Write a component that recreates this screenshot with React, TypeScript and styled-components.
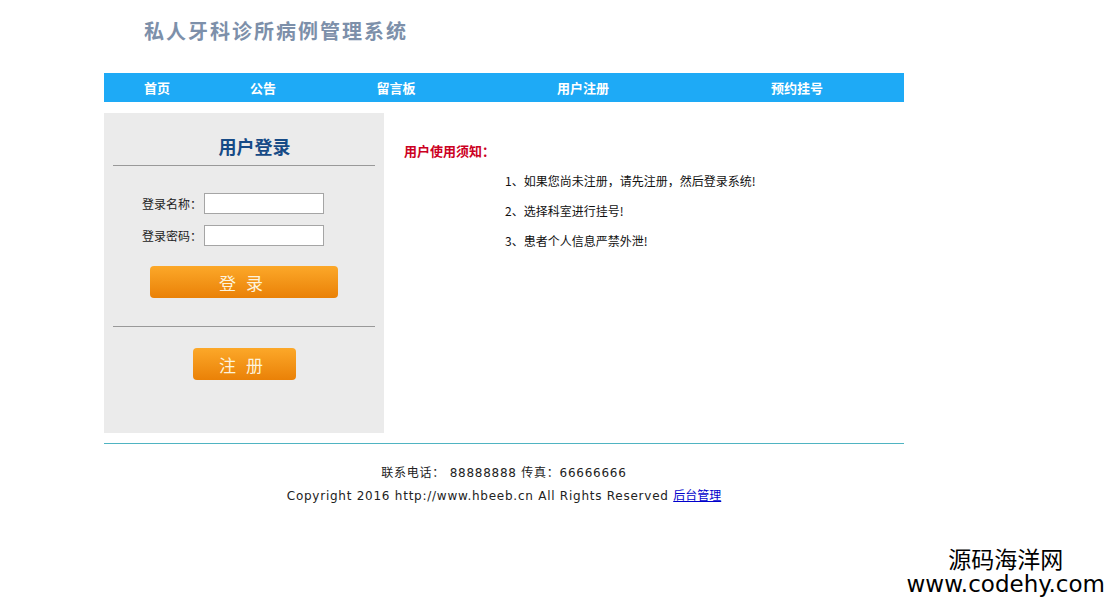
import React from 'react';
import styled, { createGlobalStyle } from 'styled-components';

const GlobalStyle = createGlobalStyle`
  body {
    margin: 0;
    background: #fff;
    font-family: 'Noto Sans CJK SC', 'DejaVu Sans', sans-serif;
  }
`;

const Page = styled.div`
  width: 800px;
  margin-left: 104px;
`;

const Header = styled.div`
  height: 73px;
  display: flex;
  align-items: center;
  padding-left: 40px;
  padding-bottom: 13px;
  box-sizing: border-box;
`;

const SiteTitle = styled.h1`
  margin: 0;
  font-size: 20px;
  font-weight: bold;
  color: #7d90aa;
  letter-spacing: 2px;
  font-family: 'Noto Sans CJK SC', serif;
`;

const Nav = styled.div`
  height: 29px;
  background: #1eaaf6;
  display: flex;
`;

const NavItem = styled.a<{ $w: number }>`
  width: ${(p) => p.$w}px;
  display: flex;
  align-items: center;
  justify-content: center;
  color: #fff;
  font-size: 13px;
  font-weight: bold;
  text-decoration: none;
`;

const Main = styled.div`
  display: flex;
  margin-top: 11px;
  height: 320px;
`;

const LoginPanel = styled.div`
  width: 280px;
  background: #ebebeb;
  display: flex;
  flex-direction: column;
  align-items: center;
  padding: 0 9px;
  box-sizing: border-box;
`;

const PanelTitle = styled.h2`
  margin: 0;
  width: 100%;
  text-align: center;
  font-size: 18px;
  font-weight: bold;
  color: #164a86;
  padding: 20px 0 6px 21px;
  box-sizing: border-box;
  border-bottom: 1px solid #999;
  line-height: 26px;
`;

const Form = styled.div`
  display: flex;
  flex-direction: column;
  gap: 11px;
  margin-top: 27px;
  margin-left: -22px;
`;

const Row = styled.label`
  display: flex;
  align-items: center;
  font-size: 12px;
  color: #222;
`;

const Input = styled.input`
  width: 120px;
  height: 21px;
  box-sizing: border-box;
  border: 1px solid #a5a5a5;
  background: #fff;
  margin-left: 2px;
`;

const OrangeButton = styled.button<{ $w: number }>`
  width: ${(p) => p.$w}px;
  height: 32px;
  border: none;
  border-radius: 4px;
  background: linear-gradient(#fca829, #ea8107);
  color: #fdf3dc;
  font-size: 17px;
  letter-spacing: 10px;
  padding-left: 10px;
  font-family: 'Noto Sans CJK SC', sans-serif;
  cursor: pointer;
`;

const LoginButtonWrap = styled.div`
  margin-top: 20px;
  padding-bottom: 28px;
  width: 100%;
  display: flex;
  justify-content: center;
  border-bottom: 1px solid #999;
`;

const RegisterWrap = styled.div`
  margin-top: 21px;
`;

const Notice = styled.div`
  flex: 1;
  padding: 28px 0 0 20px;
`;

const NoticeTitle = styled.h3`
  margin: 0 0 6px;
  color: #cc0022;
  font-size: 13px;
  font-weight: bold;
`;

const NoticeItem = styled.p`
  margin: 0;
  padding-left: 101px;
  font-size: 12px;
  line-height: 30px;
  color: #111;
`;

const Divider = styled.div`
  border-top: 1px solid #4fb4c2;
  margin-top: 10px;
`;

const Footer = styled.div`
  text-align: center;
  font-family: 'DejaVu Sans', 'Noto Sans CJK SC', sans-serif;
  font-size: 12px;
  color: #222;
  padding-top: 19px;
  line-height: 21px;
  letter-spacing: 0.75px;
`;

const FooterLink = styled.a`
  color: #0000cc;
  text-decoration: underline;
  letter-spacing: 0;
  font-family: 'Noto Sans CJK SC', sans-serif;
`;

const Watermark = styled.div`
  position: absolute;
  right: 5px;
  bottom: 6px;
  text-align: center;
  color: #000;
  font-family: 'Noto Sans CJK SC', 'DejaVu Sans', sans-serif;
  line-height: 26px;
`;

const WmCn = styled.div`
  font-size: 23px;
`;

const WmEn = styled.div`
  font-size: 23px;
  font-family: 'DejaVu Sans', sans-serif;
`;

const navItems: [string, number][] = [
  ['首页', 106],
  ['公告', 106],
  ['留言板', 160],
  ['用户注册', 214],
  ['预约挂号', 214],
];

const notices = [
  '1、如果您尚未注册，请先注册，然后登录系统!',
  '2、选择科室进行挂号!',
  '3、患者个人信息严禁外泄!',
];

export default function App() {
  return (
    <>
      <GlobalStyle />
      <Page>
        <Header>
          <SiteTitle>私人牙科诊所病例管理系统</SiteTitle>
        </Header>
        <Nav>
          {navItems.map(([label, w]) => (
            <NavItem key={label} $w={w} href="#">
              {label}
            </NavItem>
          ))}
        </Nav>
        <Main>
          <LoginPanel>
            <PanelTitle>用户登录</PanelTitle>
            <Form>
              <Row>
                登录名称：
                <Input type="text" />
              </Row>
              <Row>
                登录密码：
                <Input type="password" />
              </Row>
            </Form>
            <LoginButtonWrap>
              <OrangeButton $w={188}>登录</OrangeButton>
            </LoginButtonWrap>
            <RegisterWrap>
              <OrangeButton $w={103}>注册</OrangeButton>
            </RegisterWrap>
          </LoginPanel>
          <Notice>
            <NoticeTitle>用户使用须知：</NoticeTitle>
            {notices.map((n) => (
              <NoticeItem key={n}>{n}</NoticeItem>
            ))}
          </Notice>
        </Main>
        <Divider />
        <Footer>
          <div>联系电话： 88888888 传真：66666666</div>
          <div>
            Copyright 2016 http://www.hbeeb.cn All Rights Reserved{' '}
            <FooterLink href="#">后台管理</FooterLink>
          </div>
        </Footer>
      </Page>
      <Watermark>
        <WmCn>源码海洋网</WmCn>
        <WmEn>www.codehy.com</WmEn>
      </Watermark>
    </>
  );
}
